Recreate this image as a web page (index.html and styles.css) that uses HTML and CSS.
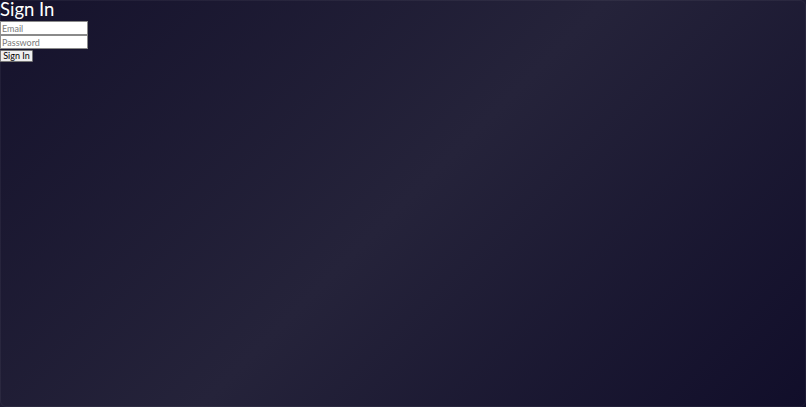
FILE: index.html
```html
<!DOCTYPE html>
<html lang="en">
<head>
<meta charset="utf-8">
<title>Sign In</title>
<link rel="stylesheet" href="styles.css">
</head>
<body>
<main class="page">
  <h1 class="title">Sign In</h1>
  <form class="form">
    <input class="field" type="email" placeholder="Email">
    <input class="field" type="password" placeholder="Password">
    <button class="btn" type="button">Sign In</button>
  </form>
</main>
</body>
</html>
```
FILE: styles.css
```css
html, body {
  margin: 0;
  height: 100%;
}
body {
  background: linear-gradient(135deg, #15122c 0%, #25233a 50%, #110e2a 100%);
  font-family: Lato, "Open Sans", sans-serif;
  color: #ffffff;
  overflow: hidden;
}
body::after {
  content: "";
  position: fixed;
  inset: 0;
  border: 1px solid rgba(255, 255, 255, 0.05);
  border-radius: 6px;
  pointer-events: none;
}
.page {
  min-height: 100%;
}
.title {
  margin: 0 0 3px;
  font-size: 18.5px;
  font-weight: 400;
  line-height: 18px;
  padding-top: 0;
}
.form {
  display: flex;
  flex-direction: column;
  align-items: flex-start;
}
.field {
  box-sizing: border-box;
  width: 88px;
  height: 14px;
  margin: 0;
  padding: 0 1px;
  border: 1px solid #8a8a8a;
  background: #ffffff;
  font-family: inherit;
  font-size: 9px;
  color: #222;
}
.field::placeholder {
  color: #7a7a7a;
}
.btn {
  box-sizing: border-box;
  margin-top: 1px;
  height: 12px;
  width: 33px;
  padding: 0;
  border: 1px solid #767676;
  border-radius: 1px;
  background: #efefef;
  font-family: inherit;
  font-size: 9px;
  line-height: 10px;
  color: #000;
}
```
